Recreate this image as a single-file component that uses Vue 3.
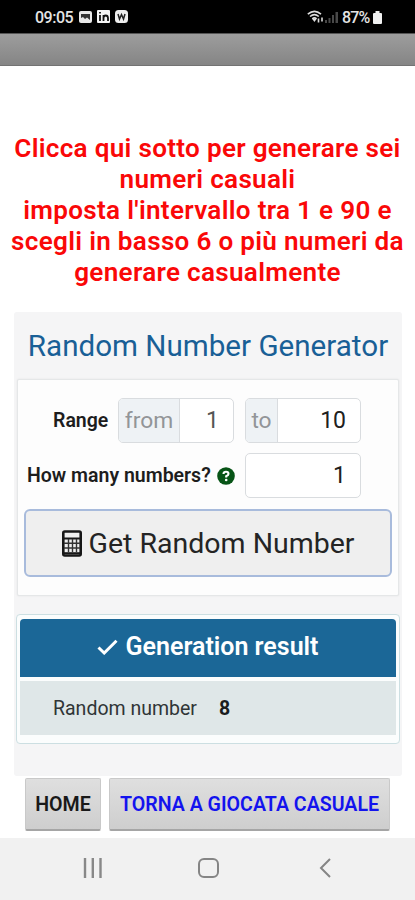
<script setup>
const heading = [
  'Clicca qui sotto per generare sei',
  'numeri casuali',
  "imposta l'intervallo tra 1 e 90 e",
  'scegli in basso 6 o più numeri da',
  'generare casualmente'
]
</script>

<template>
  <div class="screen">
    <header class="status">
      <span class="clock">09:05</span>
      <svg class="notifications" width="50" height="14" viewBox="0 0 50 14">
        <rect x="0" y="1" width="13" height="12" rx="2" fill="#e8e8e8" />
        <path d="M2 4h9v6L8 7.500 6 9 4 7 2 8z" fill="#333" />
        <rect x="18" y="0" width="13" height="13" rx="1" fill="#f4f4f4" />
        <path d="M21 5v6M21 2v1.500M24.500 11V5M24.500 8q0-2.500 2.200-2.500T29 8v3" fill="none" stroke="#111" stroke-width="1.800" />
        <rect x="36" y="0" width="13" height="13" rx="3.500" fill="#eee" />
        <path d="M39 4l1.500 5 2-4.500 2 4.500L46 4" fill="none" stroke="#222" stroke-width="1.500" />
      </svg>
      <span class="grow"></span>
      <svg class="signals" width="32" height="14" viewBox="0 0 32 14">
        <g fill="none" stroke="#ddd" stroke-width="1.600">
          <path d="M.8 4.200Q7.500-1.500 14 4.200M3 6.500q4.500-3.800 8.800 0M5.300 8.800q2.200-2 4.200 0" />
          <path d="M11.500 8.500v4M15 7.500v4" />
        </g>
        <path d="M7.400 12L5 8.500h5z" fill="#ddd" />
        <path d="M18 13v-3h2v3zM21.500 13V8h2v5zM25 13V5h2v8zM28.500 13V2h2.500v11z" fill="#494949" />
      </svg>
      <span class="percent">87%</span>
      <svg class="battery" width="9" height="13" viewBox="0 0 9 13">
        <path d="M2.500 0h4v2H8q1 0 1 1v9q0 1-1 1H1q-1 0-1-1V3q0-1 1-1h1.500z" fill="#f1f1f1" />
      </svg>
    </header>
    <div class="toolbar"></div>

    <main class="content">
      <h1 class="intro">
        <span v-for="(line, i) in heading" :key="i" class="line">{{ line }}</span>
      </h1>

      <section class="generator">
        <h2 class="title">Random Number Generator</h2>
        <div class="form">
          <div class="row">
            <span class="label range">Range</span>
            <div class="group">
              <span class="addon from">from</span><span class="value one">1</span>
            </div>
            <div class="group">
              <span class="addon to">to</span><span class="value">10</span>
            </div>
          </div>
          <div class="row second">
            <span class="label many">How many numbers?</span>
            <svg class="help" width="18" height="18" viewBox="0 0 18 18">
              <circle cx="9" cy="9" r="8.800" fill="#075416" />
              <path d="M6.500 7Q6.500 4.800 9 4.800T11.500 7Q11.500 8.200 9.200 9.200V10.500" fill="none" stroke="#fff" stroke-width="2.100" />
              <circle cx="9.200" cy="13" r="1.300" fill="#fff" />
            </svg>
            <div class="group"><span class="value count">1</span></div>
          </div>
          <button class="get">
            <svg width="20" height="27" viewBox="0 0 20 27">
              <rect x="1.300" y="1.500" width="17.400" height="24" rx="1.500" fill="none" stroke="#171717" stroke-width="2.600" />
              <path d="M2 8.500h16" stroke="#171717" stroke-width="2" />
              <path d="M2 13.300h16M2 18h16M6.500 9v13M10.500 9v13M14.500 9v13" stroke="#333" stroke-width="1.400" />
              <path d="M2 23.200h16" stroke="#171717" stroke-width="2" />
            </svg>
            <span>Get Random Number</span>
          </button>
        </div>

        <div class="result">
          <div class="result-head">
            <svg width="21" height="16" viewBox="0 0 21 16">
              <path d="M1.500 8.500l5.700 5.500L19.500 1.800" fill="none" stroke="#fff" stroke-width="3" />
            </svg>
            <span>Generation result</span>
          </div>
          <div class="result-row">
            <span class="name">Random number</span>
            <span class="number">8</span>
          </div>
        </div>
      </section>

      <div class="actions">
        <button class="android home">HOME</button>
        <button class="android back">TORNA A GIOCATA CASUALE</button>
      </div>
    </main>

    <nav class="navbar">
      <svg width="20" height="20" viewBox="0 0 20 20"><path d="M2 0v20M9.800 0v20M17.500 0v20" stroke="#888" stroke-width="2.400" /></svg>
      <svg width="21" height="20" viewBox="0 0 21 20"><rect x="1" y="1" width="19" height="18" rx="5" fill="none" stroke="#858585" stroke-width="2" /></svg>
      <svg width="12" height="20" viewBox="0 0 12 20"><path d="M11 1L2 10l9 9" fill="none" stroke="#858585" stroke-width="2" /></svg>
    </nav>
  </div>
</template>

<style>
body { margin: 0; background: #fff; }
</style>

<style scoped>
* { box-sizing: border-box; }
.screen { width: 415px; height: 900px; overflow: hidden; display: flex; flex-direction: column; background: #fff; font-family: Roboto, sans-serif; white-space: nowrap; }
.status { height: 33px; flex: none; display: flex; align-items: center; background: #000; color: #e4e4e4; padding: 1px 33px 0 35px; font-size: 16px; font-weight: 500; }
.clock { width: 44px; letter-spacing: -.5px; }
.grow { flex: 1; }
.percent { width: 31px; letter-spacing: -.8px; margin-left: 3px; }
.toolbar { height: 33px; flex: none; background: linear-gradient(#9d9d9d, #858585); border-top: 1px solid #555; border-bottom: 1px solid #737373; }
.content { height: 772px; flex: none; padding-top: 66px; }
.intro { margin: 0; height: 180px; padding-top: 1px; display: flex; flex-direction: column; align-items: center; color: #fa0808; font-size: 26.1px; letter-spacing: .3px; font-weight: 600; line-height: 31px; }
.line { flex: none; }
.generator { margin-left: 14px; width: 388px; height: 464px; background: #f5f5f6; padding: 0 3px; border-radius: 3px; }
.title { margin: 0; height: 67px; line-height: 68px; text-align: center; font-size: 29.6px; font-weight: 400; color: #195f96; }
.form { width: 382px; height: 217px; border: 1px solid #e5e7e8; border-radius: 2px; background: #fdfdfd; box-shadow: 0 0 2px #e3e3e3; padding: 18px 6px; }
.row { display: flex; align-items: center; gap: 11px; height: 45px; padding-left: 29px; }
.second { margin-top: 10px; padding-left: 3px; gap: 0; }
.label { font-size: 19.5px; font-weight: 600; color: #1d1d1d; padding-bottom: 1px; }
.range { width: 54px; }
.many { width: 190px; }
.help { margin-right: 10px; flex: none; }
.group { width: 116px; height: 45px; flex: none; display: flex; border: 1px solid #d9dcdf; border-radius: 5px; background: #fff; overflow: hidden; }
.addon { display: flex; align-items: center; justify-content: center; background: #eef2f5; color: #929598; border-right: 1px solid #d9dcdf; font-size: 22.8px; }
.from { width: 61px; }
.to { width: 32px; }
.value { flex: 1; display: flex; align-items: center; justify-content: flex-end; font-size: 23px; padding-right: 14px; color: #202020; }
.one { color: #555; }
.get { width: 368px; height: 68px; margin: 11px 0 0; display: flex; align-items: center; justify-content: center; gap: 7px; padding: 0; background: #efefef; border: 2px solid #a8bbdc; border-radius: 6px; font: 400 28.5px Roboto, sans-serif; color: #242424; }
.result { width: 384px; height: 130px; margin: 18px 0 0 -1px; border: 1px solid #ccdfe2; border-radius: 4px; background: #fbfdfd; padding: 4px 3px; }
.result-head { height: 58px; display: flex; align-items: center; justify-content: center; gap: 7px; background: #1b6797; border-radius: 4px 4px 0 0; color: #fff; font-size: 25px; font-weight: 600; padding-bottom: 3px; }
.result-row { height: 54px; margin-top: 4px; padding-left: 33px; background: #dfe7e8; display: flex; align-items: center; font-size: 19.5px; color: #303536; }
.name { width: 166px; }
.number { font-weight: 700; color: #191d1e; }
.actions { display: flex; gap: 8px; padding: 2px 0 0 25px; }
.android { height: 53px; padding: 0; display: flex; align-items: center; justify-content: center; border: 1px solid #c9c9c9; border-bottom: 2px solid #a5a5a5; border-radius: 2px; background: linear-gradient(#dfdfdf, #cecece); font: 600 19.6px Roboto, sans-serif; }
.home { width: 76px; color: #191919; }
.back { width: 281px; color: #1313ee; }
.navbar { height: 62px; flex: none; background: #f1f1f1; display: flex; align-items: flex-start; padding: 20px 0 0 83px; }
.navbar svg:nth-child(2) { margin-left: 95px; }
.navbar svg:nth-child(3) { margin-left: 100px; }
</style>
